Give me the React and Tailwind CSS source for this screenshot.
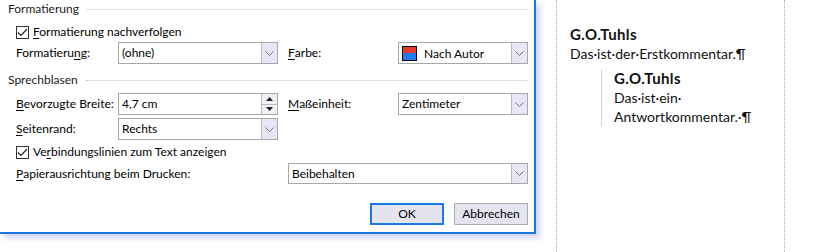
import React from 'react';

const Chevron = () => (
    <svg width="9" height="5" viewBox="0 0 9 5" fill="none">
        <polyline points="0.5,0.5 4.5,4.5 8.5,0.5" stroke="#6e6e8e" strokeWidth="1" />
    </svg>
);

const Combo = ({ children, className = '' }) => (
    <div className={`flex h-full border border-[#a8a8a8] bg-white ${className}`}>
        <div className="flex flex-1 items-center pl-[3px] text-black">{children}</div>
        <div className="flex w-[16px] items-center justify-center border-l border-[#b8b8c8] bg-[#e6e6f4]">
            <Chevron />
        </div>
    </div>
);

const Spin = ({ children, className = '' }) => (
    <div className={`flex h-full border border-[#a8a8a8] bg-white ${className}`}>
        <div className="flex flex-1 items-center pl-[3px] text-black">{children}</div>
        <div className="flex w-[16px] flex-col border-l border-[#b8b8c8] bg-[#f0f0f6]">
            <div className="flex flex-1 items-center justify-center border-b border-[#b8b8c8]">
                <svg width="7" height="4" viewBox="0 0 7 4"><polygon points="3.5,0 7,4 0,4" fill="#202020" /></svg>
            </div>
            <div className="flex flex-1 items-center justify-center">
                <svg width="7" height="4" viewBox="0 0 7 4"><polygon points="0,0 7,0 3.5,4" fill="#202020" /></svg>
            </div>
        </div>
    </div>
);

const Check = () => (
    <div className="flex h-[13px] w-[13px] items-center justify-center border border-[#333333] bg-white">
        <svg width="11" height="9" viewBox="0 0 11 9" fill="none">
            <polyline points="1,4.5 4,7.5 10,1" stroke="#222222" strokeWidth="1.2" />
        </svg>
    </div>
);

const Section = ({ title, className = '' }) => (
    <div className={`flex h-[18px] items-center ${className}`}>
        <span className="text-[#1a1a1a]">{title}</span>
        <div className="ml-[8px] flex-1 border-t border-dotted border-[#c6c6de]"></div>
    </div>
);

const U = ({ children }) => <span className="underline underline-offset-2">{children}</span>;

export default function App() {
    return (
        <div className="flex h-[252px] w-[815px] overflow-hidden bg-white font-['Lato',sans-serif]">
            <div className="w-[556px] shrink-0">
                <div className="flex h-[234px] w-[536px] flex-col border-r-2 border-b-2 border-[#1979e6] bg-white pl-[8px] pr-[6px] text-[12px] text-black shadow-[4px_4px_6px_rgba(140,140,235,0.4)]">
                    <Section title="Formatierung" />
                    <div className="mt-[4px] flex h-[20px] items-center pl-[8px]">
                        <Check />
                        <span className="ml-[4px]"><U>F</U>ormatierung nachverfolgen</span>
                    </div>
                    <div className="flex h-[22px] items-stretch pl-[8px]">
                        <div className="flex w-[102px] items-center">Formatieru<U>n</U>g:</div>
                        <Combo className="w-[160px]">(ohne)</Combo>
                        <div className="ml-[10px] flex w-[110px] items-center"><U>F</U>arbe:</div>
                        <Combo className="w-[130px]">
                            <div className="flex h-[15px] w-[15px] flex-col border border-black">
                                <div className="flex-1 bg-[#e63a2e]"></div>
                                <div className="flex-1 bg-[#1f7cf5]"></div>
                            </div>
                            <span className="ml-[7px] mt-[2px]">Nach Autor</span>
                        </Combo>
                    </div>
                    <Section title="Sprechblasen" className="mt-[7px]" />
                    <div className="mt-[4px] flex h-[22px] items-stretch pl-[8px]">
                        <div className="flex w-[102px] items-center"><U>B</U>evorzugte Breite:</div>
                        <Spin className="w-[160px]">4,7 cm</Spin>
                        <div className="ml-[10px] flex w-[110px] items-center"><U>M</U>aßeinheit:</div>
                        <Combo className="w-[130px]">Zentimeter</Combo>
                    </div>
                    <div className="mt-[3px] flex h-[22px] items-stretch pl-[8px]">
                        <div className="flex w-[102px] items-center"><U>S</U>eitenrand:</div>
                        <Combo className="w-[160px]">Rechts</Combo>
                    </div>
                    <div className="mt-[2px] flex h-[20px] items-center pl-[8px]">
                        <Check />
                        <span className="ml-[4px]">Ve<U>r</U>bindungslinien zum Text anzeigen</span>
                    </div>
                    <div className="mt-[1px] flex h-[21px] items-stretch pl-[8px]">
                        <div className="flex w-[272px] items-center"><U>P</U>apierausrichtung beim Drucken:</div>
                        <Combo className="w-[240px]">Beibehalten</Combo>
                    </div>
                    <div className="mt-[19px] flex h-[22px] justify-end gap-[10px]">
                        <button className="w-[74px] border-2 border-[#1979e6] bg-[#e4e4ee] text-black">OK</button>
                        <button className="w-[74px] border border-[#adadad] bg-[#e4e4ee] text-black">Abbrechen</button>
                    </div>
                </div>
            </div>
            <div className="h-full w-[228px] shrink-0 border-l border-dotted border-[#a8a8b8] pl-[13px] pt-[25px] text-[14px] leading-[19px] text-[#111111]">
                <div className="text-[15px] font-bold tracking-[0.4px]">G.O.Tuhls</div>
                <div>Das·ist·der·Erstkommentar.¶</div>
                <div className="mt-[6px] ml-[31px] border-l border-[#d0d0e4] pl-[12px]">
                    <div className="text-[15px] font-bold tracking-[0.4px]">G.O.Tuhls</div>
                    <div>Das·ist·ein·</div>
                    <div>Antwortkommentar.·¶</div>
                </div>
            </div>
            <div className="h-full flex-1 border-l border-dotted border-[#a8a8b8]"></div>
        </div>
    );
}
